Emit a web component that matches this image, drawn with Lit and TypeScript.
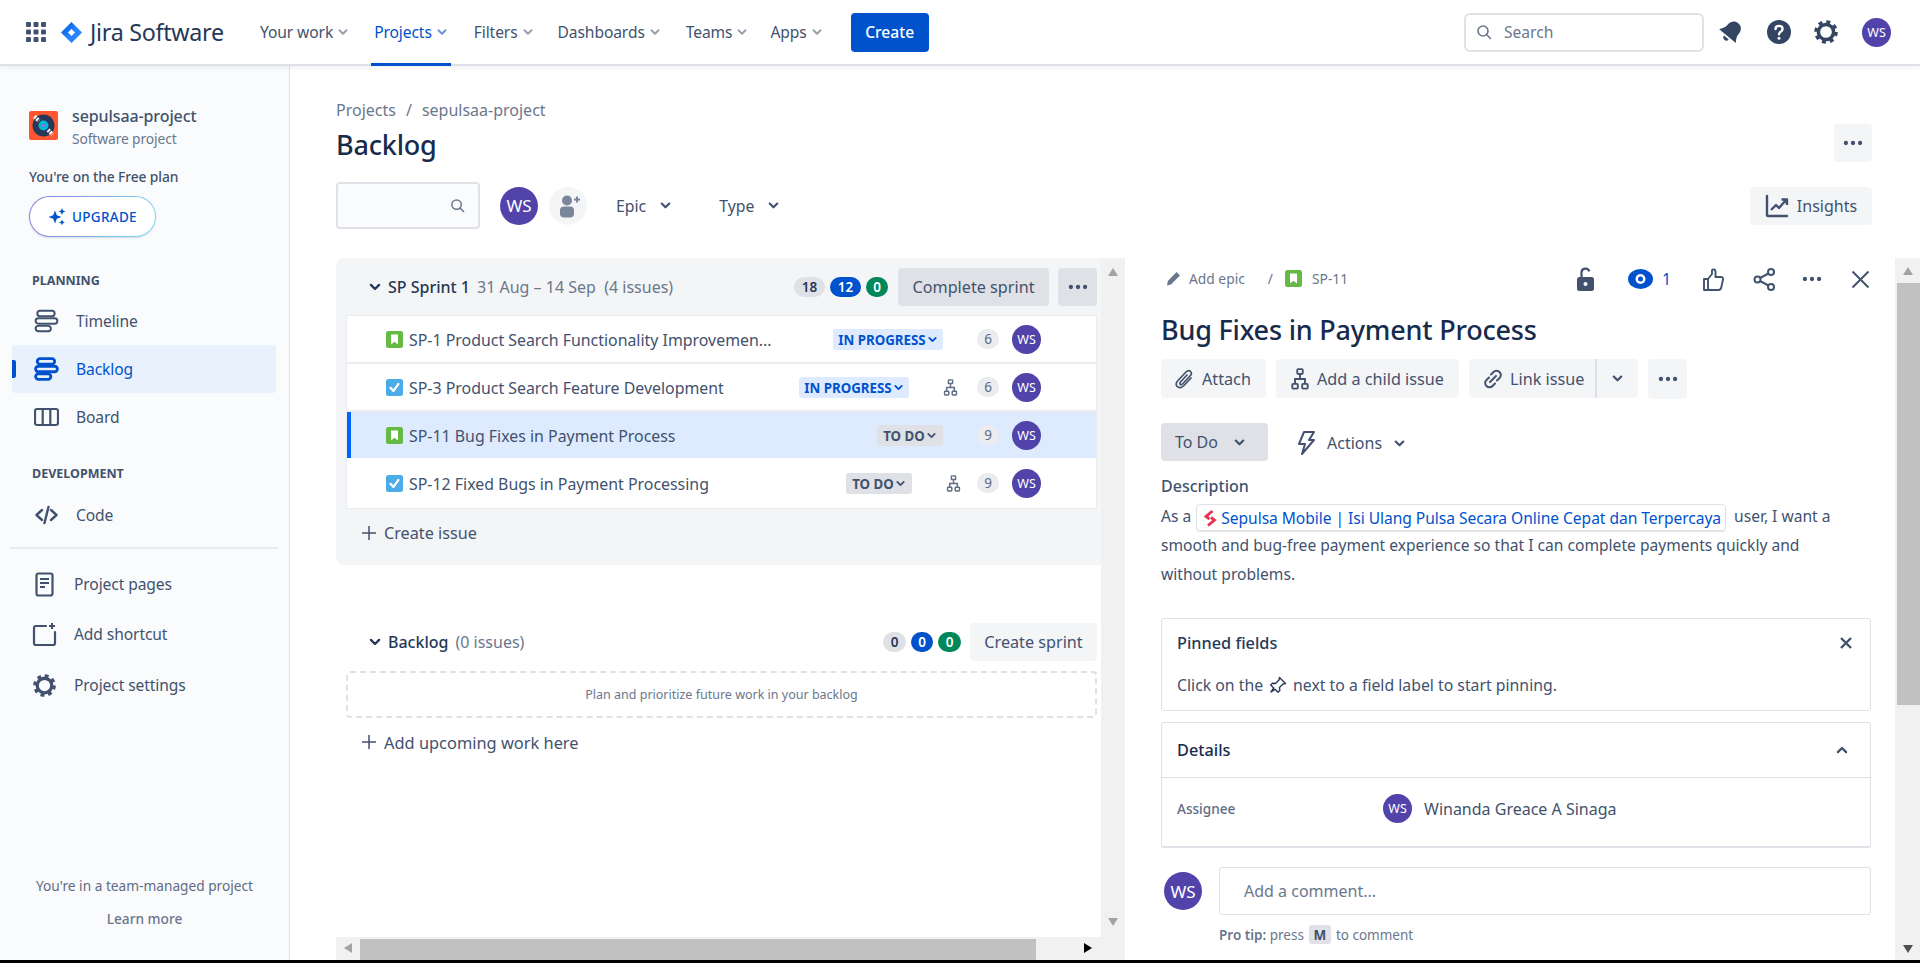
import { LitElement, html, css, svg } from "lit";
import { customElement } from "lit/decorators.js";

const chev = (cls = "") => html`<svg class="chev ${cls}" viewBox="0 0 12 12"><path d="M2.5 4.2 6 7.7l3.5-3.5" fill="none" stroke="currentColor" stroke-width="2" stroke-linecap="round" stroke-linejoin="round"/></svg>`;
const dots = html`<svg class="dots" viewBox="0 0 24 6"><circle cx="3.5" cy="3" r="2.6" fill="currentColor"/><circle cx="12" cy="3" r="2.6" fill="currentColor"/><circle cx="20.5" cy="3" r="2.6" fill="currentColor"/></svg>`;
const avatar = (size: string) => html`<span class="avatar ${size}">WS</span>`;
const story = html`<svg class="type" viewBox="0 0 17 17"><rect width="17" height="17" rx="2.5" fill="#65ba43"/><path d="M5 3.5h7v10l-3.5-2.8L5 13.5z" fill="#fff"/></svg>`;
const task = html`<svg class="type" viewBox="0 0 17 17"><rect width="17" height="17" rx="2.5" fill="#4bade8"/><path d="M4.500 8.800 7.400 12l5-7" fill="none" stroke="#fff" stroke-width="2.200" stroke-linecap="round" stroke-linejoin="round"/></svg>`;
const tree = (c = "ctree") => html`<svg class="${c}" viewBox="0 0 16 20"><g fill="none" stroke="currentColor" stroke-width="1.700"><rect x="5.500" y="1" width="5" height="4.400" rx=".8"/><rect x="1" y="14.400" width="5" height="4.400" rx=".8"/><rect x="10" y="14.400" width="5" height="4.400" rx=".8"/><path d="M8 5.400V10M3.500 14.400V10h9v4.400"/></g></svg>`;
const gear = (cls: string) => html`<svg class="${cls}" viewBox="0 0 24 24"><circle cx="12" cy="12" r="7" fill="none" stroke="currentColor" stroke-width="3.200"/><circle cx="12" cy="12" r="9.400" fill="none" stroke="currentColor" stroke-width="3" stroke-dasharray="3.700 3.680"/></svg>`;
const mag = (cls: string) => html`<svg class="${cls}" viewBox="0 0 16 16"><circle cx="7" cy="7" r="5" fill="none" stroke="currentColor" stroke-width="1.600"/><path d="m10.800 10.800 3.700 3.700" stroke="currentColor" stroke-width="1.600" stroke-linecap="round"/></svg>`;
const tri = (d: string, cls = "") => html`<svg class="tri ${d} ${cls}" viewBox="0 0 12 12"><path d="M6 2 11 10H1z" fill="currentColor"/></svg>`;
const plus = html`<svg viewBox="0 0 14 14"><path d="M7 0v14M0 7h14" stroke="currentColor" stroke-width="1.500"/></svg>`;
const stack = (sw: number) => svg`<g fill="none" stroke="currentColor" stroke-width="${sw}"><rect x="3" y="1.500" width="16" height="5" rx="2.500"/><rect x="1.500" y="8.500" width="20" height="5" rx="2.500"/><rect x="1.500" y="15.500" width="14" height="5" rx="2.500"/></g>`;

const navItems: [string, boolean, number][] = [["Your work", false, 0], ["Projects", true, 25], ["Filters", false, 26], ["Dashboards", false, 24], ["Teams", false, 25], ["Apps", false, 22]];

const issues = [
  { icon: story, key: "SP-1", text: "Product Search Functionality Improvemen...", st: "IN PROGRESS", blue: true, sw: 110, right: 153, child: 0, n: 6, sel: false },
  { icon: task, key: "SP-3", text: "Product Search Feature Development", st: "IN PROGRESS", blue: true, sw: 110, right: 187, child: 138, n: 6, sel: false },
  { icon: story, key: "SP-11", text: "Bug Fixes in Payment Process", st: "TO DO", blue: false, sw: 66, right: 153, child: 0, n: 9, sel: true },
  { icon: task, key: "SP-12", text: "Fixed Bugs in Payment Processing", st: "TO DO", blue: false, sw: 66, right: 184, child: 135, n: 9, sel: false },
];

@customElement("app-root")
export class AppRoot extends LitElement {
  static styles = css`
    :host { display: block; width: 1920px; height: 963px; overflow: hidden; font-family: "Noto Sans", "Open Sans", sans-serif; color: #42526e; font-size: 16px; background: #000; }
    * { box-sizing: border-box; }
    svg { display: block; flex: none; }
    .app { display: flex; flex-direction: column; height: 960px; background: #fff; }
    header { height: 66px; flex: none; display: flex; align-items: center; padding: 0 29px 0 26px; border-bottom: 2px solid #dfe1e6; box-shadow: 0 2px 5px rgba(9,30,66,.06); position: relative; z-index: 2; background: #fff; }
    .grid { width: 20px; height: 20px; color: #42526e; }
    .logo { width: 21px; height: 21px; margin-left: 15px; }
    .brand { margin-left: 8px; font-size: 23.3px; color: #253858; width: 132px; white-space: nowrap; letter-spacing: -.3px; }
    nav { display: flex; height: 64px; margin-left: 38px; }
    .ni { display: flex; align-items: center; height: 100%; white-space: nowrap; position: relative; font-size: 15.6px; letter-spacing: -.1px; }
    .ni .chev { width: 12px; height: 12px; color: #97a0af; margin-left: 4px; }
    .ni.on { color: #0052cc; }
    .ni.on .chev { color: #6f93d6; }
    .ni.on::after { content: ""; position: absolute; left: -3px; right: -3px; bottom: -2px; height: 3px; background: #0052cc; }
    .create { margin-left: 28px; width: 78px; height: 39px; background: #0052cc; color: #fff; border-radius: 4px; display: flex; align-items: center; justify-content: center; font-weight: 500; font-size: 15.6px; }
    .hsearch { margin-left: auto; width: 240px; height: 39px; border: 2px solid #dfe1e6; border-radius: 6px; display: flex; align-items: center; padding-left: 10px; color: #6b778c; gap: 12px; font-size: 15.6px; }
    .hsearch .m { width: 16px; height: 16px; }
    .hi { color: #344563; }
    .bell { width: 24px; height: 24px; margin-left: 15px; }
    .help { width: 26px; height: 26px; margin-left: 23px; }
    .hgear { width: 26px; height: 26px; margin-left: 21px; }
    header .avatar { margin-left: 23px; }
    .avatar { flex: none; border-radius: 50%; background: #5243aa; color: #fff; display: flex; align-items: center; justify-content: center; }
    .a29 { width: 29px; height: 29px; font-size: 12.5px; }
    .a38 { width: 38px; height: 38px; font-size: 17px; }

    .body { flex: 1; display: flex; min-height: 0; }
    aside { width: 290px; flex: none; background: #fafbfc; border-right: 1px solid #dfe1e6; display: flex; flex-direction: column; height: 100%; font-size: 15.6px; letter-spacing: -.1px; }
    .proj { display: flex; gap: 14px; margin: 39px 0 0 29px; }
    .proj svg { width: 29px; height: 29px; margin-top: 6px; }
    .pname { font-weight: 500; color: #42526e; line-height: 22px; font-size: 16px; }
    .psub { font-size: 13.8px; color: #6b778c; line-height: 22px; margin-top: 1px; }
    .free { margin: 18px 0 0 29px; font-size: 13.8px; font-weight: 500; line-height: 18px; color: #42526e; }
    .upg { margin: 10px 0 0 29px; width: 127px; height: 41px; border-radius: 21px; background: linear-gradient(#fff,#fff) padding-box, linear-gradient(120deg,#8777d9,#79e2f2) border-box; border: 1.5px solid transparent; display: flex; align-items: center; justify-content: center; gap: 6px; color: #0052cc; font-size: 13.5px; font-weight: 500; letter-spacing: .3px; box-shadow: 0 1px 2px rgba(9,30,66,.15); }
    .upg svg { width: 18px; height: 18px; }
    .sec { margin: 0 0 7px 32px; font-size: 12.5px; font-weight: 700; line-height: 18px; color: #42526e; letter-spacing: 0; }
    .sec.a { margin-top: 35px; }
    .sec.b { margin-top: 24px; margin-bottom: 8px; }
    .sn { display: flex; align-items: center; height: 48px; margin: 0 13px 0 12px; border-radius: 4px; position: relative; padding-left: 22px; }
    .sn svg { width: 25px; height: 24px; }
    .sn span { position: absolute; left: 64px; }
    .sn.on { background: #e8f1fc; color: #0052cc; }
    .sn.on::before { content: ""; position: absolute; left: 0; top: 15px; height: 18px; width: 4px; background: #0052cc; border-radius: 0 2px 2px 0; }
    .div { height: 2px; background: #ebecf0; margin: 8px 11px 0 10px; }
    .sl { height: 50px; display: flex; align-items: center; padding-left: 32px; }
    .sl svg { width: 25px; height: 25px; }
    .sl span { margin-left: 17px; }
    .sl.f { margin-top: 10px; }
    .sl.g { margin-top: 1px; }
    .foot { margin-top: auto; text-align: center; font-size: 13.7px; color: #5e6c84; padding-bottom: 32px; letter-spacing: 0; }
    .foot div { line-height: 18px; }
    .foot .lm { margin-top: 15px; font-weight: 500; color: #6b778c; }

    main { flex: 1; min-width: 0; display: flex; flex-direction: column; padding-left: 46px; }
    .crumb { margin-top: 32px; height: 24px; display: flex; align-items: center; gap: 10px; color: #6b778c; }
    .tr { margin-top: 2px; margin-right: 48px; display: flex; align-items: center; justify-content: space-between; height: 38px; }
    h1 { margin: 2px 0 0; font-size: 27px; font-weight: 500; color: #172b4d; letter-spacing: -.2px; }
    .sq { width: 38px; height: 38px; border-radius: 4px; background: #f4f5f7; display: flex; align-items: center; justify-content: center; color: #42526e; flex: none; }
    .dots { width: 20px; height: 6px; }
    .fr { margin: 20px 48px 0 0; height: 47px; display: flex; align-items: center; }
    .fs { width: 144px; height: 47px; background: #fafbfc; border: 2px solid #dfe1e6; border-radius: 4px; display: flex; align-items: center; justify-content: flex-end; padding-right: 13px; color: #6b778c; }
    .fs .m { width: 15px; height: 15px; }
    .fr .avatar { margin-left: 20px; }
    .addp { width: 38px; height: 38px; border-radius: 50%; background: #f4f5f7; margin-left: 11px; color: #7a869a; display: flex; align-items: center; justify-content: center; }
    .addp svg { width: 26px; height: 26px; }
    .fb { display: flex; align-items: center; gap: 13px; margin-left: 29px; font-size: 15.8px; }
    .fb .chev { color: #42526e; width: 13px; height: 13px; }
    .fb + .fb { margin-left: 47px; }
    .ins { margin-left: auto; height: 38px; width: 122px; background: #f4f5f7; border-radius: 4px; display: flex; align-items: center; justify-content: center; gap: 8px; }
    .ins svg { width: 24px; height: 24px; }

    .content { flex: 1; min-height: 0; margin-top: 29px; display: flex; }
    .bl { width: 789px; flex: none; display: flex; flex-direction: column; }
    .blt { flex: 1; min-height: 0; display: flex; }
    .bls { width: 765px; flex: none; }
    .vs { flex: 1; background: #f1f1f1; display: flex; flex-direction: column; justify-content: space-between; align-items: center; color: #a3a3a3; padding: 8px 0 9px; }
    .tri { width: 12px; height: 12px; }
    .tri.td { transform: rotate(180deg); }
    .tri.left { transform: rotate(-90deg); }
    .tri.right { transform: rotate(90deg); }
    .hs { height: 23px; flex: none; background: #f1f1f1; display: flex; align-items: flex-end; color: #a3a3a3; }
    .hs .left { margin: 0 6px 6px 6px; }
    .hs .thumb { width: 676px; height: 21px; background: #c1c1c1; }
    .hs .right { margin: 0 6px 6px 46px; color: #000; }
    .panel { background: #f4f5f7; border-radius: 8px 0 0 8px; height: 307px; padding: 10px 4px 8px 10px; }
    .sh { display: flex; align-items: center; height: 38px; margin-bottom: 9px; }
    .sh > .chev { width: 14px; height: 14px; margin-left: 22px; color: #253858; }
    .sh b { font-weight: 500; color: #253858; margin-left: 6px; white-space: nowrap; }
    .sh i { font-style: normal; color: #6b778c; margin-left: 7px; white-space: nowrap; }
    .bd { height: 20px; border-radius: 10px; display: flex; align-items: center; justify-content: center; font-size: 13.5px; font-weight: 600; flex: none; margin-left: 5px; }
    .bd.g { background: #dfe1e6; color: #253858; }
    .bd.b { background: #0052cc; color: #fff; }
    .bd.k { background: #00875a; color: #fff; }
    .sp { flex: 1; }
    .bt { height: 38px; border-radius: 4px; background: #dfe1e6; display: flex; align-items: center; justify-content: center; flex: none; font-size: 16.2px; }
    .bt.l { background: #f4f5f7; }
    .list { height: 194px; border: 1px solid #ebecf0; background: #fff; }
    .row { height: 48px; display: flex; align-items: center; border-bottom: 2px solid #ebecf0; padding-left: 39px; position: relative; white-space: nowrap; font-size: 15.9px; }
    .row:last-child { border-bottom-color: transparent; }
    .row.sel { background: #deebff; border-bottom-color: #fff; }
    .row.sel::before { content: ""; position: absolute; left: 0; top: 0; bottom: 0; width: 4px; background: #0065ff; }
    .type { width: 17px; height: 17px; }
    .row .tx { margin-left: 6px; padding-top: 2px; }
    .loz { height: 21px; margin-top: 1px; border-radius: 3px; display: flex; align-items: center; justify-content: center; gap: 1px; font-size: 13.3px; font-weight: 700; position: absolute; background: #dfe1e6; color: #42526e; }
    .loz.blue { background: #deebff; color: #0052cc; }
    .loz .chev { width: 11px; height: 11px; }
    .kid { position: absolute; top: 15px; width: 15px; height: 17px; }
    .ctree { width: 15px; height: 17px; color: #5e6c84; }
    .cnt { position: absolute; right: 97px; width: 22px; height: 20px; border-radius: 10px; background: #ebecf0; color: #5e6c84; font-size: 13.5px; display: flex; align-items: center; justify-content: center; }
    .row .avatar { position: absolute; right: 55px; }
    .add { display: flex; align-items: center; height: 48px; padding-left: 16px; gap: 8px; font-size: 16.2px; }
    .add svg { width: 14px; height: 14px; }
    .blk { padding: 58px 4px 0 10px; }
    .drop { height: 47px; margin-top: 10px; border: 2px dashed #dfe1e6; border-radius: 4px; display: flex; align-items: center; justify-content: center; font-size: 12.5px; color: #6b778c; }
    .blk .add { font-size: 16.4px; }

    .issue { flex: 1; min-width: 0; display: flex; }
    .id { width: 770px; flex: none; padding: 0 24px 0 36px; }
    .rs { flex: 1; background: #f1f1f1; display: flex; flex-direction: column; align-items: center; color: #a3a3a3; padding-top: 7px; }
    .rs .thumb { width: 23px; margin: 6px 0 0 2px; height: 422px; background: #c1c1c1; flex: none; }
    .rs .td { margin-top: auto; margin-bottom: 5px; color: #505050; }
    .top { height: 42px; display: flex; align-items: center; position: relative; }
    .ae { display: flex; align-items: center; font-size: 13.8px; color: #6b778c; white-space: nowrap; margin: -2px 0 0 5px; }
    .ae svg.pen { width: 15px; height: 15px; margin-right: 8px; }
    .ae .sl2 { margin: 0 12px 0 23px; }
    .ae .type { margin-right: 10px; }
    .ti { position: absolute; display: block; color: #42526e; }
    h2 { margin: 10px 0 0; font-size: 27px; line-height: 40px; font-weight: 500; color: #172b4d; letter-spacing: -.2px; white-space: nowrap; }
    .acts { margin-top: 9px; height: 39px; display: flex; gap: 10px; }
    .ab { height: 39px; border-radius: 4px; background: #f4f5f7; display: flex; align-items: center; gap: 6px; padding-left: 13px; white-space: nowrap; font-size: 16.2px; }
    .ab svg { width: 22px; height: 22px; }
    .lk { display: flex; }
    .lk .ab:first-child { border-radius: 4px 0 0 4px; width: 128px; border-right: 2px solid #dfe1e6; }
    .lk .ab:last-child { border-radius: 0 4px 4px 0; width: 41px; justify-content: center; padding: 0; }
    .lk .chev { width: 13px; height: 13px; }
    .stat { margin-top: 25px; display: flex; align-items: center; height: 38px; }
    .todo { width: 107px; height: 38px; background: #dfe1e6; border-radius: 4px; display: flex; align-items: center; gap: 15px; padding-left: 14px; }
    .todo .chev, .actn .chev { width: 13px; height: 13px; }
    .actn { display: flex; align-items: center; margin: 2px 0 0 27px; gap: 11px; }
    .actn svg.bolt { width: 21px; height: 24px; }
    .dl { margin-top: 13px; line-height: 24px; font-weight: 500; }
    .desc { line-height: 28.5px; margin: 4px 0 0; color: #42526e; white-space: nowrap; font-size: 15.6px; }
    .card { display: inline-flex; align-items: center; height: 27px; vertical-align: middle; border: 1px solid #dfe1e6; border-radius: 4px; padding: 0 4px 0 5px; color: #0052cc; gap: 3px; margin: 0 8px 0 1px; box-shadow: 0 1px 1px rgba(9,30,66,.12); letter-spacing: -.05px; }
    .card svg { width: 16px; height: 18px; }
    .box { border: 1px solid #dfe1e6; border-radius: 3px; }
    .pin { margin-top: 30px; height: 93px; padding: 0 15px; }
    .bh { display: flex; justify-content: space-between; align-items: center; font-weight: 500; color: #253858; font-size: 16.3px; }
    .pin .bh { height: 48px; }
    .pin .x { width: 14px; height: 14px; margin-right: 2px; color: #42526e; }
    .pt { display: flex; align-items: center; gap: 6px; margin-top: 6px; line-height: 24px; font-size: 15.8px; }
    .pt svg { width: 18px; height: 18px; }
    .det { margin-top: 11px; height: 126px; border-bottom-width: 2px; }
    .det .bh { height: 55px; padding: 0 21px 0 15px; border-bottom: 1px solid #dfe1e6; color: #172b4d; }
    .det .bh .chev { width: 14px; height: 14px; transform: rotate(180deg); color: #42526e; }
    .fld { display: flex; align-items: center; padding: 16px 0 0 15px; }
    .fld .lb { width: 206px; font-size: 13.6px; font-weight: 500; color: #5e6c84; }
    .fld .avatar { margin-right: 12px; }
    .cm { margin-top: 19px; display: flex; align-items: center; height: 48px; }
    .cm .avatar { margin-left: 3px; }
    .inp { margin-left: 17px; flex: 1; height: 48px; border: 1px solid #dfe1e6; border-radius: 3px; display: flex; align-items: center; padding-left: 24px; color: #6b778c; }
    .tip { margin: 10px 0 0 58px; display: flex; align-items: center; font-size: 13.5px; color: #6b778c; height: 19px; white-space: nowrap; }
    .tip b { font-weight: 600; }
    .tip kbd { font: inherit; font-weight: 700; background: #dfe1e6; border-radius: 3px; width: 22px; height: 19px; display: flex; align-items: center; justify-content: center; margin: 0 5px; font-size: 13.5px; color: #42526e; }
  `;

  render() {
    return html`<div class="app">
      <header>
        <svg class="grid" viewBox="0 0 20 20" fill="currentColor">${[0, 7.5, 15].flatMap((y) => [0, 7.5, 15].map((x) => svg`<rect x="${x}" y="${y}" width="5" height="5" rx="1"/>`))}</svg>
        <svg class="logo" viewBox="0 0 21 21"><defs><linearGradient id="lg" x1="0" y1="0" x2="1" y2="1"><stop offset="0" stop-color="#0052cc"/><stop offset=".55" stop-color="#2684ff"/></linearGradient></defs><path fill="url(#lg)" fill-rule="evenodd" d="M10.500 0 21 10.500 10.500 21 0 10.500zM10.500 7 7 10.500l3.500 3.500 3.500-3.500z"/></svg>
        <span class="brand">Jira Software</span>
        <nav>
          ${navItems.map(([t, on, ml]) => html`<div class="ni ${on ? "on" : ""}" style="margin-left:${ml}px">${t}${chev()}</div>`)}
        </nav>
        <div class="create">Create</div>
        <div class="hsearch">${mag("m")}<span>Search</span></div>
        <svg class="bell hi" viewBox="2 1 20 20"><g transform="rotate(40 12 11)" fill="currentColor"><path d="M12 1.500c-3.800 0-6 3-6 6.500 0 4-1.800 5.500-3 7.500h18c-1.200-2-3-3.500-3-7.500 0-3.500-2.200-6.500-6-6.500z"/><path d="M9.500 17h5a2.500 2.500 0 0 1-5 0z"/></g></svg>
        <svg class="help hi" viewBox="0 0 26 26"><circle cx="13" cy="13" r="12" fill="currentColor"/><path d="M9.500 10.200c0-2 1.600-3.300 3.600-3.300s3.500 1.200 3.500 3c0 2.800-3.600 2.800-3.600 5.500" fill="none" stroke="#fff" stroke-width="2.300" stroke-linecap="round"/><circle cx="13" cy="19.300" r="1.500" fill="#fff"/></svg>
        ${gear("hgear hi")}
        ${avatar("a29")}
      </header>
      <div class="body">
        <aside>
          <div class="proj">
            <svg viewBox="0 0 29 29"><rect width="29" height="29" rx="2" fill="#ff5630"/><circle cx="14.500" cy="14.500" r="11" fill="#253858"/><path d="M5.500 5.500 10 10M19 19l4.500 4.500" stroke="#fff" stroke-width="4" stroke-dasharray="2 1"/><circle cx="14.500" cy="14.500" r="5" fill="#00b8d9"/><circle cx="14.500" cy="14.500" r="1.800" fill="#8777d9"/></svg>
            <div><div class="pname">sepulsaa-project</div><div class="psub">Software project</div></div>
          </div>
          <div class="free">You're on the Free plan</div>
          <div class="upg"><svg viewBox="0 0 18 18" fill="#0052cc"><path d="M7 2.500 8.800 7.200 13.500 9 8.800 10.800 7 15.500 5.200 10.800.5 9 5.200 7.200z"/><path d="M14 0l1 2.500 2.500 1-2.500 1-1 2.500-1-2.500-2.500-1 2.500-1zM14 11.500l.9 2 2 .9-2 .9-.9 2-.9-2-2-.9 2-.9z"/></svg>UPGRADE</div>
          <div class="sec a">PLANNING</div>
          <div class="sn"><svg viewBox="0 0 23 22">${stack(1.8)}</svg><span>Timeline</span></div>
          <div class="sn on"><svg viewBox="0 0 23 22">${stack(2.6)}</svg><span>Backlog</span></div>
          <div class="sn"><svg viewBox="0 0 25 24"><g fill="none" stroke="currentColor" stroke-width="2.200"><rect x="1" y="4" width="23" height="16" rx="2"/><path d="M8.700 4v16M16.300 4v16"/></g></svg><span>Board</span></div>
          <div class="sec b">DEVELOPMENT</div>
          <div class="sn"><svg viewBox="0 0 25 24"><path d="M8 7 2.500 12 8 17M17 7l5.500 5L17 17M14.500 4l-4 16" fill="none" stroke="currentColor" stroke-width="2.400" stroke-linecap="round" stroke-linejoin="round"/></svg><span>Code</span></div>
          <div class="div"></div>
          <div class="sl f"><svg viewBox="0 0 25 25"><rect x="4.500" y="1.500" width="16" height="22" rx="2" fill="none" stroke="currentColor" stroke-width="2.200"/><path d="M8 7h9M8 11h9M8 15h5" stroke="currentColor" stroke-width="2"/></svg><span>Project pages</span></div>
          <div class="sl"><svg viewBox="0 0 25 25"><path d="M14 4H4a2 2 0 0 0-2 2v15a2 2 0 0 0 2 2h17a2 2 0 0 0 2-2V10" fill="none" stroke="currentColor" stroke-width="2.200" stroke-linecap="round"/><path d="M20 1v6M17 4h6" stroke="currentColor" stroke-width="2"/></svg><span>Add shortcut</span></div>
          <div class="sl g">${gear("")}<span>Project settings</span></div>
          <div class="foot"><div>You're in a team-managed project</div><div class="lm">Learn more</div></div>
        </aside>
        <main>
          <div class="crumb"><span>Projects</span><span>/</span><span>sepulsaa-project</span></div>
          <div class="tr"><h1>Backlog</h1><div class="sq">${dots}</div></div>
          <div class="fr">
            <div class="fs">${mag("m")}</div>
            ${avatar("a38")}
            <div class="addp"><svg viewBox="0 0 26 26" fill="currentColor"><circle cx="12" cy="7.500" r="5"/><rect x="5" y="13.500" width="14" height="11" rx="4"/><path d="M19 5.500h2v-2h2v2h2v2h-2v2h-2v-2h-2z"/></svg></div>
            <div class="fb">Epic${chev()}</div>
            <div class="fb">Type${chev()}</div>
            <div class="ins"><svg viewBox="0 0 24 24"><path d="M2 2v19a1 1 0 0 0 1 1h19" fill="none" stroke="currentColor" stroke-width="2.400" stroke-linecap="round"/><path d="m6 16 5-5 3 3 7-8M16.500 5.500H22V11" fill="none" stroke="currentColor" stroke-width="2.400" stroke-linejoin="round"/></svg>Insights</div>
          </div>
          <div class="content">
            <section class="bl">
              <div class="blt">
                <div class="bls">
                  <div class="panel">
                    <div class="sh">${chev()}<b>SP Sprint 1</b><i>31 Aug – 14 Sep &nbsp;(4 issues)</i><span class="sp"></span>
                      <span class="bd g" style="width:31px">18</span><span class="bd b" style="width:31px">12</span><span class="bd k" style="width:22px">0</span>
                      <span class="bt" style="width:151px;margin-left:10px">Complete sprint</span><span class="bt" style="width:39px;margin-left:9px">${dots}</span></div>
                    <div class="list">
                      ${issues.map((r) => html`<div class="row ${r.sel ? "sel" : ""}">${r.icon}<span class="tx">${r.key} ${r.text}</span>
                        <span class="loz ${r.blue ? "blue" : ""}" style="width:${r.sw}px;right:${r.right}px">${r.st}${chev()}</span>
                        ${r.child ? html`<span class="kid" style="right:${r.child}px">${tree()}</span>` : ""}
                        <span class="cnt">${r.n}</span>${avatar("a29")}</div>`)}
                    </div>
                    <div class="add">${plus}Create issue</div>
                  </div>
                  <div class="blk">
                    <div class="sh" style="margin:0">${chev()}<b>Backlog</b><i>(0 issues)</i><span class="sp"></span>
                      <span class="bd g" style="width:23px">0</span><span class="bd b" style="width:22px">0</span><span class="bd k" style="width:23px">0</span>
                      <span class="bt l" style="width:127px;margin-left:9px">Create sprint</span></div>
                    <div class="drop">Plan and prioritize future work in your backlog</div>
                    <div class="add">${plus}Add upcoming work here</div>
                  </div>
                </div>
                <div class="vs">${tri("tu")}${tri("td")}</div>
              </div>
              <div class="hs">${tri("left")}<div class="thumb"></div>${tri("right")}</div>
            </section>
            <section class="issue">
              <div class="id">
                <div class="top">
                  <div class="ae"><svg class="pen" viewBox="0 0 15 15"><path d="M10.500 1 14 4.500 5 13.500 1 14.500 1.800 10z" fill="#6b778c"/></svg>Add epic<span class="sl2">/</span>${story}SP-11</div>
                  <svg class="ti" style="left:416px;width:17px;height:24px" viewBox="0 0 17 24"><path d="M4.500 11V5.500a4 4 0 0 1 7.800-1.200" fill="none" stroke="currentColor" stroke-width="2.200"/><rect y="10" width="17" height="14" rx="2.500" fill="currentColor"/><circle cx="8.500" cy="17" r="2" fill="#fff"/></svg>
                  <svg class="ti" style="left:467px;width:25px;height:20px;color:#0052cc" viewBox="0 0 25 20"><ellipse cx="12.500" cy="10" rx="12.500" ry="10" fill="currentColor"/><circle cx="12.500" cy="10" r="5" fill="#fff"/><circle cx="12.500" cy="10" r="2.500" fill="currentColor"/></svg>
                  <span class="ti" style="left:501px;color:#0052cc">1</span>
                  <svg class="ti" style="left:542px;width:21px;height:23px" viewBox="0 0 21 23"><path d="M1 11h4v11H1zM5 11l4-5V2.500C9 1 12.500.5 12.500 4v5h5.500c1.500 0 2.300 1.200 2 2.500l-1.800 8.300c-.3 1.300-1.100 2.200-2.700 2.200H5" fill="none" stroke="currentColor" stroke-width="1.900" stroke-linejoin="round"/></svg>
                  <svg class="ti" style="left:592px;width:23px;height:23px" viewBox="0 0 23 23"><g fill="none" stroke="currentColor" stroke-width="2"><circle cx="4.500" cy="11.500" r="3"/><circle cx="18" cy="4" r="3"/><circle cx="18" cy="19" r="3"/><path d="M7 10 15.500 5.500M7 13l8.500 4.500"/></g></svg>
                  <span class="ti" style="left:641px">${dots}</span>
                  <svg class="ti" style="left:690px;width:19px;height:19px" viewBox="0 0 19 19"><path d="m1.500 1.500 16 16M17.500 1.500l-16 16" stroke="currentColor" stroke-width="2"/></svg>
                </div>
                <h2>Bug Fixes in Payment Process</h2>
                <div class="acts">
                  <div class="ab" style="width:105px"><svg viewBox="0 0 22 22"><path d="M17 10 9.500 18c-2 2-5 2-6.300.5S2 14.500 4 12.500l8-8.500c1.500-1.500 3.500-1.500 4.500-.5s1 3-.5 4.500L8.500 16c-.8.800-1.800.8-2.300.3s-.5-1.500.3-2.300L13 7" fill="none" stroke="currentColor" stroke-width="1.700" stroke-linecap="round"/></svg>Attach</div>
                  <div class="ab" style="width:183px">${tree("tb")}Add a child issue</div>
                  <div class="lk"><div class="ab"><svg viewBox="0 0 22 22"><path d="M9 6.500 11.500 4a4 4 0 0 1 6 0 4 4 0 0 1 0 6L15 12.500M13 15.500 10.500 18a4 4 0 0 1-6 0 4 4 0 0 1 0-6L7 9.500M8 14l6-6" fill="none" stroke="currentColor" stroke-width="2" stroke-linecap="round"/></svg>Link issue</div><div class="ab">${chev()}</div></div>
                  <div class="sq" style="width:39px;height:40px">${dots}</div>
                </div>
                <div class="stat"><div class="todo">To Do${chev()}</div>
                  <div class="actn"><svg class="bolt" viewBox="0 0 21 24"><path d="M9 1h10l-5 8h5L7 23l3-10H4z" fill="none" stroke="currentColor" stroke-width="2" stroke-linejoin="round"/></svg>Actions${chev()}</div></div>
                <div class="dl">Description</div>
                <p class="desc">As a <span class="card"><svg viewBox="0 0 16 18"><path d="M10.500 2 4 7.500 7.500 10M6 16.500 12.500 11 9 8.500" fill="none" stroke="#e8304f" stroke-width="2.800"/></svg>Sepulsa Mobile | Isi Ulang Pulsa Secara Online Cepat dan Terpercaya</span>user, I want a<br>smooth and bug-free payment experience so that I can complete payments quickly and<br>without problems.</p>
                <div class="box pin">
                  <div class="bh">Pinned fields<svg class="x" viewBox="0 0 14 14"><path d="m2 2 10 10M12 2 2 12" stroke="currentColor" stroke-width="2.400"/></svg></div>
                  <div class="pt">Click on the <svg viewBox="0 0 18 18"><path d="M10.500 1.500 16.500 7.500 14 8l-3.500 3.500.3 3L9 16.300l-3-3L2 16l2.700-4-3-3 1.800-1.800 3 .3L10 4z" fill="none" stroke="#253858" stroke-width="1.400" stroke-linejoin="round"/></svg> next to a field label to start pinning.</div>
                </div>
                <div class="box det">
                  <div class="bh">Details${chev()}</div>
                  <div class="fld"><span class="lb">Assignee</span>${avatar("a29")}<span>Winanda Greace A Sinaga</span></div>
                </div>
                <div class="cm">${avatar("a38")}<div class="inp">Add a comment...</div></div>
                <div class="tip"><b>Pro tip:</b>&nbsp;press<kbd>M</kbd>to comment</div>
              </div>
              <div class="rs">${tri("tu")}<div class="thumb"></div>${tri("td")}</div>
            </section>
          </div>
        </main>
      </div>
    </div>`;
  }
}
